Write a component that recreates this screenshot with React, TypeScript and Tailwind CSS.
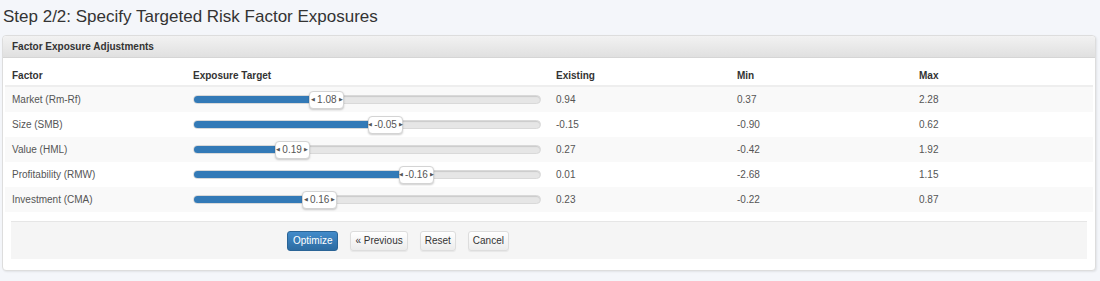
const rows = [
  { name: 'Market (Rm-Rf)', value: 1.08, existing: '0.94', min: 0.37, max: 2.28 },
  { name: 'Size (SMB)', value: -0.05, existing: '-0.15', min: -0.9, max: 0.62 },
  { name: 'Value (HML)', value: 0.19, existing: '0.27', min: -0.42, max: 1.92 },
  { name: 'Profitability (RMW)', value: -0.16, existing: '0.01', min: -2.68, max: 1.15 },
  { name: 'Investment (CMA)', value: 0.16, existing: '0.23', min: -0.22, max: 0.87 },
];

const TRACK = 348;
const HANDLE = 35;

function Slider({ value, min, max }: { value: number; min: number; max: number }) {
  const left = ((value - min) / (max - min)) * (TRACK - HANDLE);
  return (
    <div className="relative h-[18px] w-[348px] flex items-center">
      <div className="h-[9px] w-full rounded-full bg-[#e6e6e6] shadow-[inset_0_1px_1px_rgba(0,0,0,0.12)] border border-[#d9d9d9] overflow-hidden">
        <div className="h-full bg-[#337ab7]" style={{ width: left + 4 }} />
      </div>
      <div
        className="absolute top-0 h-[18px] w-[35px] rounded-[4px] bg-white border border-[#d4d4d4] shadow-[0_1px_2px_rgba(0,0,0,0.2)] flex items-center justify-center gap-[2px] text-[10px] text-[#555]"
        style={{ left }}
      >
        <span className="text-[5px] leading-none">◀</span>
        <span>{value.toFixed(2)}</span>
        <span className="text-[5px] leading-none">▶</span>
      </div>
    </div>
  );
}

function Btn({ children, primary }: { children: React.ReactNode; primary?: boolean }) {
  return (
    <button
      className={
        primary
          ? 'h-[20px] px-[5px] rounded-[3px] border border-[#2a6496] bg-gradient-to-b from-[#428bca] to-[#2d6ca2] text-white text-[10px]'
          : 'h-[20px] px-[4px] rounded-[3px] border border-[#ddd] bg-gradient-to-b from-white to-[#ececec] text-[#333] text-[10px] shadow-[0_1px_1px_rgba(0,0,0,0.06)]'
      }
    >
      {children}
    </button>
  );
}

export default function App() {
  return (
    <div className="w-[1100px] h-[281px] bg-[#f4f6fa] pt-[6px] px-[2px] text-[#333]" style={{ fontFamily: '"Liberation Sans", Arial, sans-serif' }}>
      <h2 className="text-[17px] leading-[21px] pl-[1px] mb-[8px]">Step 2/2: Specify Targeted Risk Factor Exposures</h2>
      <div className="w-[1094px] bg-white border border-[#ddd] rounded-[4px] shadow-[1px_1px_2px_rgba(0,0,0,0.08)]">
        <div className="h-[22px] flex items-center px-[9px] bg-gradient-to-b from-[#f2f2f2] to-[#e0e0e0] border-b border-[#d5d5d5] rounded-t-[4px] text-[10px] font-bold">
          Factor Exposure Adjustments
        </div>
        <div className="px-[2px] pt-[8px] pb-[11px]">
          <div className="grid grid-cols-[181px_363px_181px_182px_1fr] h-[21px] items-center border-b-2 border-[#eee] pl-[7px] text-[10px] font-bold">
            <div>Factor</div>
            <div>Exposure Target</div>
            <div>Existing</div>
            <div>Min</div>
            <div>Max</div>
          </div>
          {rows.map((r, i) => (
            <div
              key={r.name}
              className={`grid grid-cols-[181px_363px_181px_182px_1fr] h-[25px] items-center pl-[7px] text-[10px] text-[#555] ${i % 2 === 0 ? 'bg-[#f9f9f9]' : ''}`}
            >
              <div>{r.name}</div>
              <div>
                <Slider value={r.value} min={r.min} max={r.max} />
              </div>
              <div>{r.existing}</div>
              <div>{r.min.toFixed(2)}</div>
              <div>{r.max.toFixed(2)}</div>
            </div>
          ))}
          <div className="mt-[9px] mx-[6px] h-[38px] bg-[#f5f5f5] border-t border-[#e6e6e6] flex items-center gap-[12px] pl-[276px]">
            <Btn primary>Optimize</Btn>
            <Btn>« Previous</Btn>
            <Btn>Reset</Btn>
            <Btn>Cancel</Btn>
          </div>
        </div>
      </div>
    </div>
  );
}
